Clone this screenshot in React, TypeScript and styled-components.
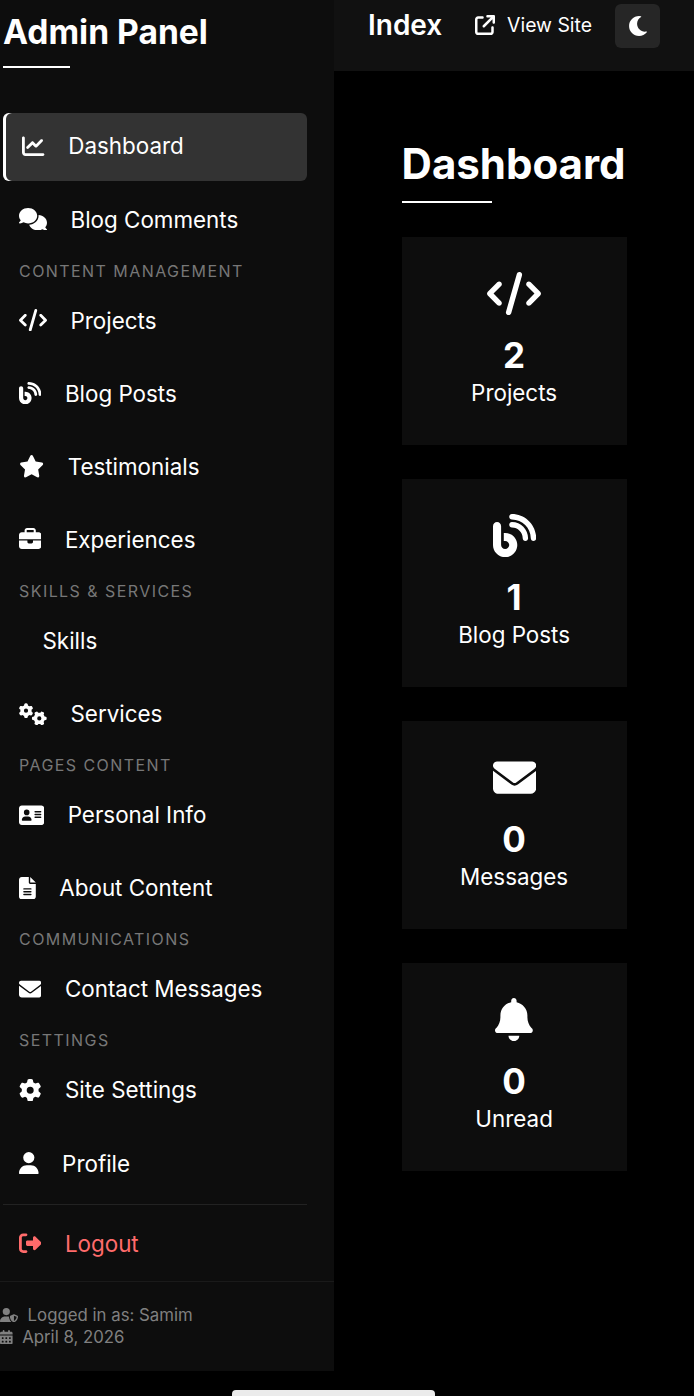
import React from 'react';
import styled, { createGlobalStyle } from 'styled-components';
import { FaMoon } from 'react-icons/fa';
import {
  FaAddressCard,
  FaArrowUpRightFromSquare,
  FaBell,
  FaBlog,
  FaBriefcase,
  FaCalendarDays,
  FaChartLine,
  FaCode,
  FaComments,
  FaEnvelope,
  FaFileLines,
  FaGear,
  FaGears,
  FaRightFromBracket,
  FaStar,
  FaUser,
  FaUserShield,
} from 'react-icons/fa6';

const GlobalStyle = createGlobalStyle`
  html, body {
    margin: 0;
    background: #000;
    color: #fff;
    font-family: Inter, "Liberation Sans", sans-serif;
  }
  * { box-sizing: border-box; }
`;

// react-icons draws every glyph in a 1em square, these keep the real glyph width
const CodeIcon = styled(FaCode)`width: 1.25em;`;
const CommentsIcon = styled(FaComments)`width: 1.25em;`;
const GearsIcon = styled(FaGears)`width: 1.25em;`;
const StarIcon = styled(FaStar)`width: 1.125em;`;
const CardIcon = styled(FaAddressCard)`width: 1.125em;`;
const FileIcon = styled(FaFileLines)`width: 0.75em;`;
const UserIcon = styled(FaUser)`width: 0.875em;`;
const BellIcon = styled(FaBell)`width: 0.875em;`;
const ShieldIcon = styled(FaUserShield)`width: 1.25em;`;
const CalendarIcon = styled(FaCalendarDays)`width: 0.875em;`;

const Page = styled.div`
  width: 694px;
  height: 1396px;
  overflow: hidden;
`;

const Layout = styled.div`
  display: flex;
  align-items: flex-start;
`;

const Sidebar = styled.aside`
  width: 334px;
  height: 1371px;
  flex-shrink: 0;
  background: #0d0d0d;
  display: flex;
  flex-direction: column;
`;

const Brand = styled.div`
  padding: 12px 0 0 3px;
  height: 113px;
  flex-shrink: 0;
`;

const BrandTitle = styled.h1`
  margin: 0;
  font-size: 33.6px;
  line-height: 40px;
  font-weight: 700;
`;

const ShortRule = styled.div<{ $width: number }>`
  width: ${(p) => p.$width}px;
  height: 2px;
  background: #fff;
`;

const BrandRule = styled(ShortRule)`
  margin-top: 14px;
`;

const Nav = styled.nav`
  display: flex;
  flex-direction: column;
  padding-left: 3px;
  width: 307px;
  flex-shrink: 0;
`;

const NavItem = styled.div<{ $active?: boolean; $danger?: boolean }>`
  height: 68px;
  margin-bottom: ${(p) => (p.$danger ? '0' : '5.2px')};
  padding-bottom: 2.2px;
  display: flex;
  align-items: center;
  gap: 23.5px;
  padding-left: ${(p) => (p.$active ? '19.4px' : '16px')};
  font-size: 22.4px;
  color: ${(p) => (p.$danger ? '#ff6b6b' : '#fff')};
  background: ${(p) => (p.$active ? '#333' : 'transparent')};
  border-radius: ${(p) => (p.$active ? '6px' : '0')};
  box-shadow: ${(p) => (p.$active ? 'inset 3px 0 0 #fff' : 'none')};
  svg {
    font-size: 22.4px;
    flex-shrink: 0;
  }
`;

const EmptyIcon = styled.span`
  width: 0;
`;

const SectionTitle = styled.div`
  font-size: 16px;
  line-height: 20px;
  letter-spacing: 1.44px;
  text-transform: uppercase;
  color: #777;
  padding: 1.2px 0 6.6px 16px;
`;

const Divider = styled.div`
  height: 1px;
  background: #222;
  margin: 1px 0 5px;
`;

const Footer = styled.div`
  margin-top: auto;
  height: 90px;
  flex-shrink: 0;
  border-top: 1px solid #1a1a1a;
  padding-top: 22px;
  font-size: 16.8px;
  line-height: 22px;
  color: #808080;
`;

const FooterRow = styled.div`
  display: flex;
  align-items: center;
  gap: 9.6px;
  svg {
    font-size: 14.4px;
    flex-shrink: 0;
  }
`;

const Main = styled.main`
  flex: 1;
  min-width: 0;
`;

const Topbar = styled.header`
  height: 71px;
  background: #111;
  display: flex;
  align-items: flex-start;
  padding: 3.6px 34px 0 34px;
`;

const PageName = styled.h2`
  margin: 0;
  font-size: 28px;
  line-height: 42px;
  font-weight: 600;
  flex: 1;
`;

const ViewSite = styled.div`
  display: flex;
  align-items: center;
  gap: 12px;
  height: 42px;
  margin-right: 23.2px;
  font-size: 19.4px;
  svg {
    font-size: 20px;
    flex-shrink: 0;
  }
`;

const ThemeButton = styled.div`
  width: 44.8px;
  height: 44.8px;
  background: #262626;
  border-radius: 6px;
  display: flex;
  align-items: center;
  justify-content: center;
  font-size: 20px;
`;

const Content = styled.section`
  padding: 68px 67.4px 0 67.6px;
`;

const PageTitle = styled.h2`
  margin: 0;
  font-size: 42px;
  line-height: 50px;
  font-weight: 700;
`;

const TitleRule = styled(ShortRule)`
  margin: 12px 0 34px;
`;

const Cards = styled.div`
  display: flex;
  flex-direction: column;
  gap: 34px;
`;

const Card = styled.div`
  height: 208px;
  background: #0d0d0d;
  display: flex;
  flex-direction: column;
  align-items: center;
  padding-top: 35px;
  svg {
    font-size: 43.2px;
    flex-shrink: 0;
  }
`;

const CardValue = styled.div`
  margin-top: 19px;
  font-size: 35px;
  line-height: 42px;
  font-weight: 700;
`;

const CardLabel = styled.div`
  margin-top: 0.3px;
  font-size: 22.4px;
  line-height: 34px;
`;

const HomeBar = styled.div`
  width: 203px;
  height: 6px;
  margin: 19px 0 0 232px;
  background: #ebebeb;
  border-radius: 4px 4px 0 0;
`;

const cards = [
  { icon: <CodeIcon />, value: 2, label: 'Projects' },
  { icon: <FaBlog />, value: 1, label: 'Blog Posts' },
  { icon: <FaEnvelope />, value: 0, label: 'Messages' },
  { icon: <BellIcon />, value: 0, label: 'Unread' },
];

function App() {
  return (
    <Page>
      <GlobalStyle />
      <Layout>
        <Sidebar>
          <Brand>
            <BrandTitle>Admin Panel</BrandTitle>
            <BrandRule $width={67} />
          </Brand>
          <Nav>
            <NavItem $active>
              <FaChartLine />
              Dashboard
            </NavItem>
            <NavItem>
              <CommentsIcon />
              Blog Comments
            </NavItem>
            <SectionTitle>Content Management</SectionTitle>
            <NavItem>
              <CodeIcon />
              Projects
            </NavItem>
            <NavItem>
              <FaBlog />
              Blog Posts
            </NavItem>
            <NavItem>
              <StarIcon />
              Testimonials
            </NavItem>
            <NavItem>
              <FaBriefcase />
              Experiences
            </NavItem>
            <SectionTitle>Skills &amp; Services</SectionTitle>
            <NavItem>
              <EmptyIcon />
              Skills
            </NavItem>
            <NavItem>
              <GearsIcon />
              Services
            </NavItem>
            <SectionTitle>Pages Content</SectionTitle>
            <NavItem>
              <CardIcon />
              Personal Info
            </NavItem>
            <NavItem>
              <FileIcon />
              About Content
            </NavItem>
            <SectionTitle>Communications</SectionTitle>
            <NavItem>
              <FaEnvelope />
              Contact Messages
            </NavItem>
            <SectionTitle>Settings</SectionTitle>
            <NavItem>
              <FaGear />
              Site Settings
            </NavItem>
            <NavItem>
              <UserIcon />
              Profile
            </NavItem>
            <Divider />
            <NavItem $danger>
              <FaRightFromBracket />
              Logout
            </NavItem>
          </Nav>
          <Footer>
            <FooterRow>
              <ShieldIcon />
              Logged in as: Samim
            </FooterRow>
            <FooterRow>
              <CalendarIcon />
              April 8, 2026
            </FooterRow>
          </Footer>
        </Sidebar>
        <Main>
          <Topbar>
            <PageName>Index</PageName>
            <ViewSite>
              <FaArrowUpRightFromSquare />
              View Site
            </ViewSite>
            <ThemeButton>
              <FaMoon />
            </ThemeButton>
          </Topbar>
          <Content>
            <PageTitle>Dashboard</PageTitle>
            <TitleRule $width={90} />
            <Cards>
              {cards.map((card) => (
                <Card key={card.label}>
                  {card.icon}
                  <CardValue>{card.value}</CardValue>
                  <CardLabel>{card.label}</CardLabel>
                </Card>
              ))}
            </Cards>
          </Content>
        </Main>
      </Layout>
      <HomeBar />
    </Page>
  );
}

export default App;
